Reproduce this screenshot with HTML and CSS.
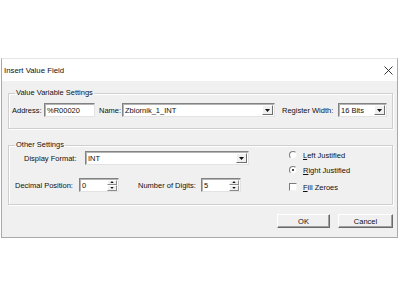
FILE: index.html
```html
<!DOCTYPE html>
<html lang="en">
<head>
    <meta charset="UTF-8">
    <title>Insert Value Field</title>
    <link rel="stylesheet" href="styles.css">
</head>
<body>
    <div class="dialog">
        <div class="titlebar">
            <span class="title">Insert Value Field</span>
            <svg class="close" width="9" height="9" viewBox="0 0 9 9"><path d="M0.5 0.5L8.5 8.5M8.5 0.5L0.5 8.5" stroke="#222" stroke-width="0.9" fill="none"/></svg>
        </div>
        <div class="client">
            <fieldset class="group">
                <legend>Value Variable Settings</legend>
                <div class="row row-var">
                    <span class="lbl lbl-addr">Address:</span>
                    <div class="edit edit-addr">%R00020</div>
                    <span class="lbl lbl-name">Name:</span>
                    <div class="edit combo combo-name">
                        <span class="val">Zbiornik_1_INT</span>
                        <span class="drop"><svg width="5" height="3" viewBox="0 0 5 3"><path d="M0 0H5L2.5 3Z" fill="#111"/></svg></span>
                    </div>
                    <span class="lbl lbl-reg">Register Width:</span>
                    <div class="edit combo combo-reg">
                        <span class="val">16 Bits</span>
                        <span class="drop"><svg width="5" height="3" viewBox="0 0 5 3"><path d="M0 0H5L2.5 3Z" fill="#111"/></svg></span>
                    </div>
                </div>
            </fieldset>
            <fieldset class="group group-other">
                <legend>Other Settings</legend>
                <div class="other">
                    <div class="other-left">
                        <div class="row row-format">
                            <span class="lbl lbl-format">Display Format:</span>
                            <div class="edit combo combo-format">
                                <span class="val">INT</span>
                                <span class="drop"><svg width="5" height="3" viewBox="0 0 5 3"><path d="M0 0H5L2.5 3Z" fill="#111"/></svg></span>
                            </div>
                        </div>
                        <div class="row row-digits">
                            <span class="lbl lbl-dec">Decimal Position:</span>
                            <div class="edit spin">
                                <span class="val">0</span>
                                <span class="spin-btns">
                                    <span class="spin-btn"><svg width="5" height="3" viewBox="0 0 5 3"><path d="M0 3H5L2.5 0Z" fill="#111"/></svg></span>
                                    <span class="spin-btn"><svg width="5" height="3" viewBox="0 0 5 3"><path d="M0 0H5L2.5 3Z" fill="#111"/></svg></span>
                                </span>
                            </div>
                            <span class="lbl lbl-num">Number of Digits:</span>
                            <div class="edit spin">
                                <span class="val">5</span>
                                <span class="spin-btns">
                                    <span class="spin-btn"><svg width="5" height="3" viewBox="0 0 5 3"><path d="M0 3H5L2.5 0Z" fill="#111"/></svg></span>
                                    <span class="spin-btn"><svg width="5" height="3" viewBox="0 0 5 3"><path d="M0 0H5L2.5 3Z" fill="#111"/></svg></span>
                                </span>
                            </div>
                        </div>
                    </div>
                    <div class="options">
                        <div class="opt opt-left"><span class="radio"></span><span><u>L</u>eft Justified</span></div>
                        <div class="opt opt-right"><span class="radio checked"></span><span><u>R</u>ight Justified</span></div>
                        <div class="opt opt-fill"><span class="check"></span><span><u>F</u>ill Zeroes</span></div>
                    </div>
                </div>
            </fieldset>
            <div class="buttons">
                <div class="btn btn-ok">OK</div>
                <div class="btn btn-cancel">Cancel</div>
            </div>
        </div>
    </div>
</body>
</html>
```

FILE: styles.css
```css
* {
    box-sizing: border-box;
}
body {
    margin: 0;
    background: #fff;
    font-family: "Liberation Sans", Arial, sans-serif;
    font-size: 7.5px;
    color: #111;
}
.dialog {
    margin: 58px 0 0 1px;
    width: 397px;
    border: 1px solid #a9a9a9;
    border-top-color: #e4e4e4;
}
.titlebar {
    height: 22px;
    background: #fff;
    display: flex;
    align-items: center;
    justify-content: space-between;
    padding: 0 4px 0 2px;
    font-size: 7.8px;
}
.client {
    background: #f0f0f0;
    padding: 7px 4px 9px 6px;
}
.group {
    margin: 0;
    padding: 0;
    min-width: 0;
    border: 1px solid #cfcfcf;
    box-shadow: inset 1px 1px #fff, 1px 1px #fff;
}
.group legend {
    margin-left: 6px;
    padding: 0 1px;
    line-height: 10px;
}
.group-other {
    margin-top: 11px;
}
.row {
    display: flex;
    align-items: center;
}
.row-var {
    padding: 5px 0 11px 3px;
}
.lbl {
    white-space: nowrap;
}
.lbl-addr { width: 32px; }
.lbl-name { width: 23px; margin-left: 4px; }
.lbl-reg { width: 56px; margin-left: 7px; }
.lbl-format { width: 61px; }
.lbl-dec { width: 64px; }
.lbl-num { width: 63px; margin-left: 19px; }
.edit {
    height: 14px;
    background: #fff;
    border: 1px solid;
    border-color: #828282 #e3e3e3 #e3e3e3 #828282;
    box-shadow: inset 1px 1px #b4b4b4;
    padding-left: 2px;
    display: flex;
    align-items: center;
}
.edit-addr { width: 51px; }
.combo {
    justify-content: space-between;
    padding-right: 1px;
}
.combo-name { width: 153px; }
.combo-reg { width: 49px; }
.combo-format { width: 164px; }
.drop {
    width: 11px;
    height: 10px;
    background: #f0f0f0;
    border: 1px solid;
    border-color: #fff #6e6e6e #6e6e6e #fff;
    display: flex;
    align-items: center;
    justify-content: center;
}
.drop svg, .spin-btn svg {
    display: block;
}
.other {
    display: flex;
}
.other-left {
    width: 280px;
    padding: 1px 0 12px 6px;
}
.row-format {
    margin-left: 9px;
}
.row-digits {
    margin-top: 13px;
}
.spin {
    width: 40px;
    justify-content: space-between;
    padding-right: 1px;
}
.spin-btns {
    display: flex;
    flex-direction: column;
    width: 10px;
    height: 11px;
}
.spin-btn {
    flex: 1;
    background: #f0f0f0;
    border: 1px solid;
    border-color: #fff #8a8a8a #8a8a8a #fff;
    display: flex;
    align-items: center;
    justify-content: center;
}
.spin-btn svg {
    width: 4px;
    height: 2px;
}
.options {
    padding-top: 0;
}
.opt {
    display: flex;
    align-items: center;
    height: 10px;
    white-space: nowrap;
}
.opt-right {
    margin-top: 5px;
}
.opt-fill {
    margin-top: 7px;
}
.radio, .check {
    width: 8px;
    height: 8px;
    margin-right: 6px;
    background: #fff;
    border: 1px solid;
    border-color: #7c7c7c #f4f4f4 #f4f4f4 #7c7c7c;
    display: flex;
    align-items: center;
    justify-content: center;
}
.radio {
    border-radius: 50%;
}
.radio.checked::after {
    content: "";
    width: 2px;
    height: 2px;
    border-radius: 50%;
    background: #111;
}
.buttons {
    display: flex;
    justify-content: flex-end;
    gap: 8px;
    margin-top: 9px;
}
.btn {
    height: 14px;
    background: #f0f0f0;
    border: 1px solid;
    border-color: #fff #6a6a6a #6a6a6a #fff;
    box-shadow: inset -1px -1px #a0a0a0;
    display: flex;
    align-items: center;
    justify-content: center;
}
.btn-ok { width: 53px; }
.btn-cancel { width: 55px; }
```
